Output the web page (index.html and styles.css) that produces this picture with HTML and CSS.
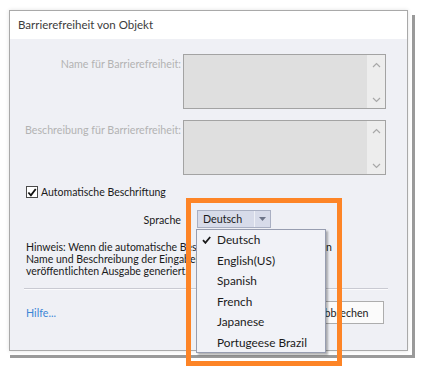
FILE: index.html
```html
<!DOCTYPE html>
<html lang="de">
<head>
  <meta charset="UTF-8" />
  <meta name="viewport" content="width=device-width, initial-scale=1.0"/>
  <title>Barrierefreiheit von Objekt</title>
  <link rel="stylesheet" href="styles.css">
</head>
<body>

  <!-- Dialog -->
  <div class="dialog">
    <div class="dialog-title">Barrierefreiheit von Objekt</div>

    <div class="dialog-body">
      <div class="fields">
        <label class="field-label">Name für Barrierefreiheit:</label>
        <div class="textbox">
          <div class="scroll">
            <svg width="9" height="6" viewBox="0 0 9 6"><path d="M1 5 L4.5 1.5 L8 5" fill="none" stroke="#a8a8a8" stroke-width="1.2"/></svg>
            <svg width="9" height="6" viewBox="0 0 9 6"><path d="M1 1 L4.5 4.5 L8 1" fill="none" stroke="#a8a8a8" stroke-width="1.2"/></svg>
          </div>
        </div>

        <label class="field-label">Beschreibung für Barrierefreiheit:</label>
        <div class="textbox">
          <div class="scroll">
            <svg width="9" height="6" viewBox="0 0 9 6"><path d="M1 5 L4.5 1.5 L8 5" fill="none" stroke="#a8a8a8" stroke-width="1.2"/></svg>
            <svg width="9" height="6" viewBox="0 0 9 6"><path d="M1 1 L4.5 4.5 L8 1" fill="none" stroke="#a8a8a8" stroke-width="1.2"/></svg>
          </div>
        </div>
      </div>

      <div class="check-row">
        <span class="checkbox">
          <svg width="11" height="11" viewBox="0 0 11 11"><path d="M1.5 5.5 L4.3 8.6 L9.6 1.6" fill="none" stroke="#111" stroke-width="2"/></svg>
        </span>
        Automatische Beschriftung
      </div>

      <div class="lang-row">
        <span class="lang-label">Sprache</span>
        <div class="select">
          <span class="select-value">Deutsch</span>
          <span class="select-arrow">
            <svg width="7" height="4" viewBox="0 0 7 4"><path d="M0 0 H7 L3.5 4 Z" fill="#6d7488"/></svg>
          </span>
        </div>
      </div>

      <p class="hint">
        Hinweis: Wenn die automatische Beschriftung aktiviert ist, werden<br>
        Name und Beschreibung der Eingabehilfen automatisch in der<br>
        veröffentlichten Ausgabe generiert.
      </p>

      <div class="separator"></div>

      <div class="footer">
        <a href="#" class="help-link">Hilfe...</a>
        <div class="buttons">
          <button class="btn">OK</button>
          <button class="btn">Abbrechen</button>
        </div>
      </div>
    </div>

    <!-- Open language menu -->
    <ul class="menu">
      <li class="menu-item">
        <svg class="menu-check" width="9" height="8" viewBox="0 0 9 8"><path d="M1 4.2 L3.4 6.8 L8.2 1" fill="none" stroke="#1a1a1a" stroke-width="1.8"/></svg>
        Deutsch
      </li>
      <li class="menu-item">English(US)</li>
      <li class="menu-item">Spanish</li>
      <li class="menu-item">French</li>
      <li class="menu-item">Japanese</li>
      <li class="menu-item">Portugeese Brazil</li>
    </ul>

    <div class="highlight"></div>
  </div>

</body>
</html>
```

FILE: styles.css
```css
* {
  margin: 0;
  padding: 0;
  box-sizing: border-box;
  font-family: Lato, 'Noto Sans', sans-serif;
}

body {
  background-color: #ffffff;
  width: 425px;
  height: 383px;
  overflow: hidden;
}

.dialog {
  position: relative;
  margin: 10px 0 0 9px;
  width: 399px;
  height: 341px;
  border: 1px solid #a9a9a9;
  background-color: #eff0f5;
  box-shadow: 0 0 4px rgba(0, 0, 0, 0.12);
  display: flex;
  flex-direction: column;
}

/* offset frame behind the dialog */
.dialog::after {
  content: "";
  position: absolute;
  left: 0;
  top: 4px;
  right: -8px;
  bottom: -8px;
  border-right: 3px solid #9a9a9a;
  border-bottom: 3px solid #9a9a9a;
  z-index: -1;
  filter: blur(0.5px);
}

.dialog-title {
  height: 28px;
  background-color: #ffffff;
  color: #3c3c3c;
  font-size: 11.5px;
  line-height: 28px;
  padding-left: 8px;
}

.dialog-body {
  flex: 1;
  padding: 15px 0 0 0;
  display: flex;
  flex-direction: column;
}

.fields {
  display: grid;
  grid-template-columns: 171px 203px;
  column-gap: 2px;
  row-gap: 11px;
}

.field-label {
  text-align: right;
  font-size: 10.7px;
  color: #b3b3b3;
  padding-top: 3px;
  white-space: nowrap;
}

.textbox {
  height: 55px;
  background-color: #dfdfdf;
  border: 1px solid #a3a3a3;
  display: flex;
  justify-content: flex-end;
}

.scroll {
  width: 18px;
  background-color: #ededed;
  display: flex;
  flex-direction: column;
  justify-content: space-between;
  align-items: center;
  padding: 7px 0 5px;
}

.check-row {
  margin: 9px 0 0 16px;
  height: 16px;
  display: flex;
  align-items: center;
  gap: 3px;
  font-size: 10.5px;
  color: #1a1a1a;
}

.checkbox {
  width: 12px;
  height: 12px;
  border: 1px solid #4a4a4a;
  background-color: #ffffff;
  display: flex;
  align-items: center;
  justify-content: center;
}

.lang-row {
  margin-top: 10px;
  display: flex;
  align-items: center;
}

.lang-label {
  width: 171px;
  text-align: right;
  font-size: 10.7px;
  color: #1a1a1a;
}

.select {
  margin-left: 16px;
  width: 74px;
  height: 18px;
  background-color: #d7dbe9;
  border: 1px solid #a9afc2;
  display: flex;
  font-size: 10.7px;
  color: #1a1a1a;
}

.select-value {
  flex: 1;
  padding-left: 5px;
  line-height: 16px;
}

.select-arrow {
  width: 16px;
  border-left: 1px solid #eef0f6;
  display: flex;
  align-items: center;
  justify-content: center;
}

.hint {
  margin: 13px 0 0 16px;
  font-size: 10.5px;
  line-height: 12px;
  color: #1a1a1a;
  white-space: nowrap;
}

.separator {
  margin: 11px 19px 0 14px;
  height: 2px;
  border-top: 1px solid #c9cad2;
  border-bottom: 1px solid #fbfbfd;
}

.footer {
  margin: 11px 23px 0 16px;
  display: flex;
  align-items: center;
  justify-content: space-between;
}

.help-link {
  color: #3d86d6;
  font-size: 10.7px;
  text-decoration: none;
}

.buttons {
  display: flex;
  gap: 4px;
}

.btn {
  width: 82px;
  height: 23px;
  background-color: #fbfbfb;
  border: 1px solid #adadad;
  font-size: 10.7px;
  color: #1a1a1a;
}

.menu {
  position: absolute;
  left: 186px;
  top: 218px;
  width: 130px;
  height: 124px;
  list-style: none;
  background-color: #f1f2f7;
  border: 1px solid #979db0;
  box-shadow: 2px 2px 2px rgba(0, 0, 0, 0.3);
  z-index: 2;
}

.menu-item {
  position: relative;
  height: 20.5px;
  line-height: 20.5px;
  padding-left: 20px;
  font-size: 11.8px;
  color: #1a1a1a;
}

.menu-check {
  position: absolute;
  left: 5px;
  top: 6px;
}

.highlight {
  position: absolute;
  left: 176px;
  top: 187px;
  width: 156px;
  height: 168px;
  border: 5px solid #fd8426;
  z-index: 3;
}
```
